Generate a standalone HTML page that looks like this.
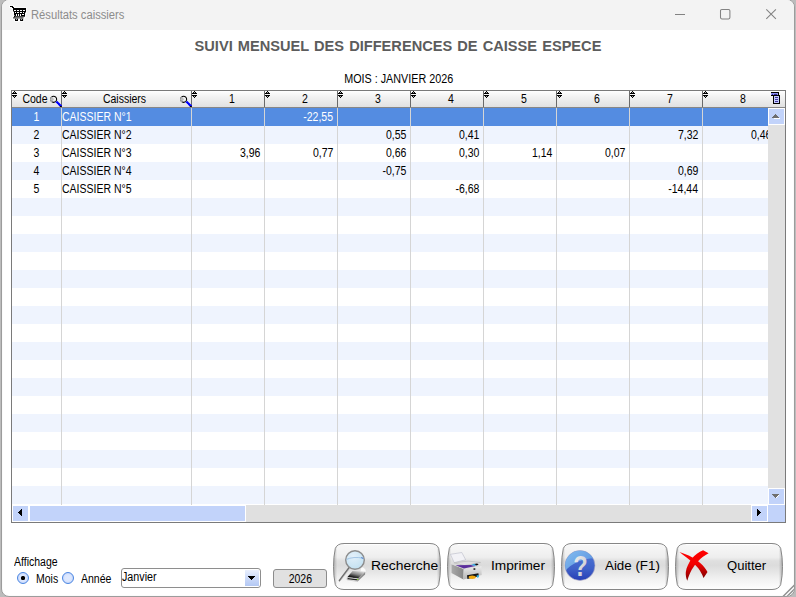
<!DOCTYPE html>
<html lang="fr"><head><meta charset="utf-8"><title>Résultats caissiers</title>
<style>
html,body{margin:0;padding:0}
body{width:796px;height:597px;overflow:hidden;background:#bcbcbc;font-family:"Liberation Sans",sans-serif;font-size:12px;color:#000;position:relative}
.win{position:absolute;left:1px;top:-1px;width:792px;height:596px;border:1px solid #9c9c9c;border-radius:8px;background:#fff;overflow:hidden;box-shadow:inset 0 0 0 1px #fbfbfb}
.tb{position:absolute;left:0;top:0;width:100%;height:30px;background:#f3f3f3}
.abs{position:absolute}
.ttl{position:absolute;left:29px;top:7px;font-size:12px;color:#8c8c8c;line-height:16px;white-space:nowrap}
.ttl span{display:inline-block;transform:scaleX(.934);transform-origin:left center}
.h1{position:absolute;left:0;width:792px;top:38px;text-align:center;font-weight:bold;font-size:14px;word-spacing:1px;transform:scaleX(1.043);color:#5c5c5c;line-height:16px;white-space:nowrap}
.mois{position:absolute;left:0;width:792px;top:72px;text-align:center;font-size:12px;line-height:14px;white-space:nowrap}
.nar{display:inline-block;transform:scaleX(.897);margin-left:2px}
.grid{position:absolute;left:9px;top:90px;width:773px;height:431px;border:1px solid #7a7a7a;background:#fff;overflow:hidden}
.hdr{position:absolute;left:0;top:0;width:773px;height:16px;border-bottom:1px solid #878787;background:linear-gradient(#fff 0,#fcfcfc 8%,#f4f4f4 30%,#e1e1e1 100%)}
.hc{position:absolute;top:0;height:16px;border-right:1px solid #6a6a6a;box-sizing:content-box}
.ht{position:absolute;top:1px;line-height:14px;white-space:nowrap;transform:scaleX(.875)}
.ht0{left:0;width:38px;text-align:center;left:4px}
.ht1{left:0;right:0;text-align:center;margin-left:-4px}
.ht2{left:0;width:72px;text-align:center;margin-left:4px}
.row{position:absolute;left:0;width:756px;height:18px}
.row.alt{background:#eff4fe}
.row.wh{background:#fff}
.row.sel{background:#548ce1;color:#fff}
.row span{position:absolute;top:2px;line-height:14px;white-space:nowrap}
.row span b{font-weight:normal;display:inline-block;transform:scaleX(.875)}
.c0{left:0;width:49px;text-align:center}
.c0 b{transform-origin:center}
.c1{left:50px}
.c1 b{transform-origin:left center}
.cn{width:68px;text-align:right}
.cn b{transform-origin:right center}
.vl{position:absolute;top:17px;width:1px;height:397px;background:#d5d5d5}
.vs{position:absolute;left:756px;top:17px;width:17px;height:397px;background:#e1e1e1}
.hs{position:absolute;left:0;top:414px;width:773px;height:17px;background:#fff}
.sbtn{position:absolute;width:15px;height:15px;border:1px solid #fff;background:#c2d3fa}
.thumb{position:absolute;left:17px;top:0;width:215px;height:15px;border:1px solid #fff;background:#c2d3fa}
.htrack{position:absolute;left:234px;top:0;width:505px;height:17px;background:#e0e0e0}
.corner{position:absolute;left:756px;top:0;width:17px;height:17px;background:#c2d3fa}
.srt{position:absolute;left:0;top:0;width:5px;height:7px}
.srt svg,.mag svg,.tblico svg{display:block}
.mag{position:absolute;right:-1px;top:4px;width:12px;height:12px}
.tblico{position:absolute;left:759px;top:1px;width:10px;height:12px}
.lbl{position:absolute;line-height:14px;white-space:nowrap}
.lbl b,.year b{font-weight:normal;display:inline-block;transform:scaleX(.875);transform-origin:left center}
.radio{position:absolute;width:10px;height:10px;border:1px solid #4a86e2;border-radius:50%;background:radial-gradient(circle,#dfe9ff 0,#dce7fe 45%,#c6d6fa 75%)}
.radio .dot{position:absolute;left:3px;top:3px;width:4px;height:4px;border-radius:1.500px;background:#000}
.combo{position:absolute;left:119px;top:568px;width:138px;height:18px;border:1px solid #8e8e8e;border-radius:3px;background:#fff}
.cbtn{position:absolute;right:1px;top:1px;width:14px;height:16px;background:linear-gradient(#e9effd,#cfdcf9 45%,#b3c8f4)}
.year{position:absolute;left:271px;top:569px;width:52px;height:17px;border:1px solid #8c8c8c;background:#e1e1e1;text-align:center;line-height:18px;border-radius:3px}
.year b{transform-origin:center}
.btn{position:absolute;top:543px;width:108px;height:47px}
.bt{position:absolute;top:15px;font-size:13.700px;line-height:16px;white-space:nowrap;transform-origin:left center}
.hc.last{border-right:none}

</style></head><body>
<div class="win">
<div class="tb"></div>
<svg class="abs" style="left:6px;top:4px" width="20" height="19" viewBox="8 4 20 19" shape-rendering="crispEdges"><path d="M9 5h5v3h-5zM11 6h4v3h-4zM12 7h15v3h-15zM12 8h15v3h-15zM12 9h15v3h-15zM12 10h15v3h-15zM13 11h14v3h-14zM13 12h13v3h-13zM13 13h13v3h-13zM13 14h13v3h-13zM13 15h13v3h-13zM12 16h13v3h-13zM12 17h13v3h-13zM14 18h10v3h-10zM14 19h10v3h-10z" fill="#fbfbfb"/><path d="M10 6h3v1h-3zM12 7h2v1h-2zM13 8h13v1h-13zM13 9h13v1h-13zM13 10h1v1h-1zM16 10h1v1h-1zM19 10h1v1h-1zM22 10h1v1h-1zM25 10h1v1h-1zM14 11h12v1h-12zM14 12h1v1h-1zM16 12h1v1h-1zM19 12h1v1h-1zM22 12h1v1h-1zM24 12h1v1h-1zM14 13h11v1h-11zM14 14h2v1h-2zM17 14h1v1h-1zM19 14h1v1h-1zM21 14h1v1h-1zM24 14h1v1h-1zM15 15h1v1h-1zM17 15h1v1h-1zM19 15h1v1h-1zM21 15h4v1h-4zM14 16h1v1h-1z" fill="#000"/><path d="M13 11h1v1h-1zM14 15h1v1h-1z" fill="#777"/><path d="M25 12h1v1h-1z" fill="#888"/><path d="M15 16h10v1h-10z" fill="#4a4a4a"/><g shape-rendering="auto"><path d="M14.900 16.600l-1.500 1.300h10.200" fill="none" stroke="#000" stroke-width=".9"/><path d="M15 18.800h3v2.100h-3zM20.100 18.800h3v2.100h-3z" fill="#000"/><path d="M16.100 19.300h.9v.8h-.9zM21.100 19.300h.9v.8h-.9z" fill="#fff"/></g></svg>
<div class="ttl"><span>Résultats caissiers</span></div>
<svg class="abs" style="left:672px;top:8px" width="106" height="12" viewBox="0 0 106 12" fill="none" stroke="#828282" stroke-width="1.050"><path d="M1 6.5h10"/><rect x="46.5" y="1.5" width="9.4" height="9.4" rx="1.3"/><path d="M92.3 1.3l9.6 9.6M101.9 1.3l-9.6 9.6"/></svg>
<div class="h1">SUIVI MENSUEL DES DIFFERENCES DE CAISSE ESPECE</div>
<div class="mois"><span class="nar">MOIS : JANVIER 2026</span></div>

<div class="grid"><div class="hdr"><div class="hc" style="left:0px;width:49px"><i class="srt"><svg width="5" height="7" viewBox="0 0 5 7" shape-rendering="crispEdges"><path d="M2 0h1v1H2zM1 1h3v1H1zM0 2h5v1H0zM0 4h5v1H0zM1 5h3v1H1zM2 6h1v1H2z"/><path d="M2 1h1v1H2zM2 5h1v1H2z" fill="#aaa"/></svg></i><span class="ht ht0">Code</span><i class="mag"><svg width="12" height="12" viewBox="0 0 12 12"><circle cx="3.6" cy="4.3" r="3.05" fill="#f0f0f0" stroke="#000" stroke-width="1.05"/><path d="M2.1 1.65A3.05 3.05 0 0 0 2.1 6.95" fill="none" stroke="#a9a9a9" stroke-width="1.15"/><path d="M2.3 2.4a2.600 2.600 0 0 0 0 3.800 4.500 4.500 0 0 0 1.700-1.900 4.500 4.500 0 0 0-1.700-1.900z" fill="#bdbdbd"/><path d="M6.300 6.700l5.100 4.800" stroke="#00f" stroke-width="2.300"/><path d="M5.900 8.100l3.600 3.500" stroke="#fff" stroke-width=".9" stroke-dasharray="1 1"/><path d="M9.800 11.500h2" stroke="#000" stroke-width="1"/></svg></i></div><div class="hc" style="left:50px;width:129px"><i class="srt"><svg width="5" height="7" viewBox="0 0 5 7" shape-rendering="crispEdges"><path d="M2 0h1v1H2zM1 1h3v1H1zM0 2h5v1H0zM0 4h5v1H0zM1 5h3v1H1zM2 6h1v1H2z"/><path d="M2 1h1v1H2zM2 5h1v1H2z" fill="#aaa"/></svg></i><span class="ht ht1">Caissiers</span><i class="mag"><svg width="12" height="12" viewBox="0 0 12 12"><circle cx="3.6" cy="4.3" r="3.05" fill="#f0f0f0" stroke="#000" stroke-width="1.05"/><path d="M2.1 1.65A3.05 3.05 0 0 0 2.1 6.95" fill="none" stroke="#a9a9a9" stroke-width="1.15"/><path d="M2.3 2.4a2.600 2.600 0 0 0 0 3.800 4.500 4.500 0 0 0 1.700-1.900 4.500 4.500 0 0 0-1.700-1.900z" fill="#bdbdbd"/><path d="M6.300 6.700l5.100 4.800" stroke="#00f" stroke-width="2.300"/><path d="M5.900 8.100l3.600 3.500" stroke="#fff" stroke-width=".9" stroke-dasharray="1 1"/><path d="M9.800 11.500h2" stroke="#000" stroke-width="1"/></svg></i></div><div class="hc" style="left:180px;width:72px"><i class="srt"><svg width="5" height="7" viewBox="0 0 5 7" shape-rendering="crispEdges"><path d="M2 0h1v1H2zM1 1h3v1H1zM0 2h5v1H0zM0 4h5v1H0zM1 5h3v1H1zM2 6h1v1H2z"/><path d="M2 1h1v1H2zM2 5h1v1H2z" fill="#aaa"/></svg></i><span class="ht ht2">1</span></div><div class="hc" style="left:253px;width:72px"><i class="srt"><svg width="5" height="7" viewBox="0 0 5 7" shape-rendering="crispEdges"><path d="M2 0h1v1H2zM1 1h3v1H1zM0 2h5v1H0zM0 4h5v1H0zM1 5h3v1H1zM2 6h1v1H2z"/><path d="M2 1h1v1H2zM2 5h1v1H2z" fill="#aaa"/></svg></i><span class="ht ht2">2</span></div><div class="hc" style="left:326px;width:72px"><i class="srt"><svg width="5" height="7" viewBox="0 0 5 7" shape-rendering="crispEdges"><path d="M2 0h1v1H2zM1 1h3v1H1zM0 2h5v1H0zM0 4h5v1H0zM1 5h3v1H1zM2 6h1v1H2z"/><path d="M2 1h1v1H2zM2 5h1v1H2z" fill="#aaa"/></svg></i><span class="ht ht2">3</span></div><div class="hc" style="left:399px;width:72px"><i class="srt"><svg width="5" height="7" viewBox="0 0 5 7" shape-rendering="crispEdges"><path d="M2 0h1v1H2zM1 1h3v1H1zM0 2h5v1H0zM0 4h5v1H0zM1 5h3v1H1zM2 6h1v1H2z"/><path d="M2 1h1v1H2zM2 5h1v1H2z" fill="#aaa"/></svg></i><span class="ht ht2">4</span></div><div class="hc" style="left:472px;width:72px"><i class="srt"><svg width="5" height="7" viewBox="0 0 5 7" shape-rendering="crispEdges"><path d="M2 0h1v1H2zM1 1h3v1H1zM0 2h5v1H0zM0 4h5v1H0zM1 5h3v1H1zM2 6h1v1H2z"/><path d="M2 1h1v1H2zM2 5h1v1H2z" fill="#aaa"/></svg></i><span class="ht ht2">5</span></div><div class="hc" style="left:545px;width:72px"><i class="srt"><svg width="5" height="7" viewBox="0 0 5 7" shape-rendering="crispEdges"><path d="M2 0h1v1H2zM1 1h3v1H1zM0 2h5v1H0zM0 4h5v1H0zM1 5h3v1H1zM2 6h1v1H2z"/><path d="M2 1h1v1H2zM2 5h1v1H2z" fill="#aaa"/></svg></i><span class="ht ht2">6</span></div><div class="hc" style="left:618px;width:72px"><i class="srt"><svg width="5" height="7" viewBox="0 0 5 7" shape-rendering="crispEdges"><path d="M2 0h1v1H2zM1 1h3v1H1zM0 2h5v1H0zM0 4h5v1H0zM1 5h3v1H1zM2 6h1v1H2z"/><path d="M2 1h1v1H2zM2 5h1v1H2z" fill="#aaa"/></svg></i><span class="ht ht2">7</span></div><div class="hc last" style="left:691px;width:82px"><i class="srt"><svg width="5" height="7" viewBox="0 0 5 7" shape-rendering="crispEdges"><path d="M2 0h1v1H2zM1 1h3v1H1zM0 2h5v1H0zM0 4h5v1H0zM1 5h3v1H1zM2 6h1v1H2z"/><path d="M2 1h1v1H2zM2 5h1v1H2z" fill="#aaa"/></svg></i><span class="ht ht2">8</span></div><i class="tblico"><svg width="10" height="12" viewBox="0 0 10 12" shape-rendering="crispEdges"><path d="M0 0h8v4H0z" fill="#000"/><path d="M0 1h7v2H0z" fill="#8f93f3"/><path d="M1 2h1v1H1zM3 2h3v1H3z" fill="#3a2f9a"/><path d="M2 3h7v9H2z" fill="#000"/><path d="M3 4h5v7H3z" fill="#c3cbff"/><path d="M4 5h3v1H4zM4 7h3v1H4zM4 9h3v1H4z" fill="#43359f"/></svg></i></div><div class="row sel" style="top:17px"><span class="c0"><b>1</b></span><span class="c1"><b>CAISSIER N°1</b></span><span class="cn" style="left:253px"><b>-22,55</b></span></div><div class="row alt" style="top:35px"><span class="c0"><b>2</b></span><span class="c1"><b>CAISSIER N°2</b></span><span class="cn" style="left:326px"><b>0,55</b></span><span class="cn" style="left:399px"><b>0,41</b></span><span class="cn" style="left:618px"><b>7,32</b></span><span class="cn" style="left:691px"><b>0,46</b></span></div><div class="row wh" style="top:53px"><span class="c0"><b>3</b></span><span class="c1"><b>CAISSIER N°3</b></span><span class="cn" style="left:180px"><b>3,96</b></span><span class="cn" style="left:253px"><b>0,77</b></span><span class="cn" style="left:326px"><b>0,66</b></span><span class="cn" style="left:399px"><b>0,30</b></span><span class="cn" style="left:472px"><b>1,14</b></span><span class="cn" style="left:545px"><b>0,07</b></span></div><div class="row alt" style="top:71px"><span class="c0"><b>4</b></span><span class="c1"><b>CAISSIER N°4</b></span><span class="cn" style="left:326px"><b>-0,75</b></span><span class="cn" style="left:618px"><b>0,69</b></span></div><div class="row wh" style="top:89px"><span class="c0"><b>5</b></span><span class="c1"><b>CAISSIER N°5</b></span><span class="cn" style="left:399px"><b>-6,68</b></span><span class="cn" style="left:618px"><b>-14,44</b></span></div><div class="row alt" style="top:107px"></div><div class="row wh" style="top:125px"></div><div class="row alt" style="top:143px"></div><div class="row wh" style="top:161px"></div><div class="row alt" style="top:179px"></div><div class="row wh" style="top:197px"></div><div class="row alt" style="top:215px"></div><div class="row wh" style="top:233px"></div><div class="row alt" style="top:251px"></div><div class="row wh" style="top:269px"></div><div class="row alt" style="top:287px"></div><div class="row wh" style="top:305px"></div><div class="row alt" style="top:323px"></div><div class="row wh" style="top:341px"></div><div class="row alt" style="top:359px"></div><div class="row wh" style="top:377px"></div><div class="row alt" style="top:395px"></div><i class="vl" style="left:49px"></i><i class="vl" style="left:179px"></i><i class="vl" style="left:252px"></i><i class="vl" style="left:325px"></i><i class="vl" style="left:398px"></i><i class="vl" style="left:471px"></i><i class="vl" style="left:544px"></i><i class="vl" style="left:617px"></i><i class="vl" style="left:690px"></i><div class="vs"><div class="sbtn" style="left:0;top:0"><svg class="abs" style="left:3px;top:5px" width="8" height="5" viewBox="0 0 8 5" shape-rendering="crispEdges"><path d="M2 4h6v1H2z" fill="#fff"/><path d="M3 0h1v1H3zM2 1h3v1H2zM1 2h5v1H1zM0 3h7v1H0z" fill="#6e6e6e"/></svg></div><div class="sbtn" style="left:0;top:380px"><svg class="abs" style="left:3px;top:5px" width="8" height="5" viewBox="0 0 8 5" shape-rendering="crispEdges"><path d="M0 0h7v1H0zM1 1h5v1H1zM2 2h3v1H2zM3 3h1v1H3z" fill="#6e6e6e"/><path d="M6 1h1v1H6zM5 2h1v1H5zM4 3h1v1H4z" fill="#fff"/></svg></div></div>
<div class="hs"><div class="sbtn" style="left:0;top:0"><svg class="abs" style="left:5px;top:3px" width="4" height="7" viewBox="0 0 4 7" shape-rendering="crispEdges"><path d="M3 0h1v7H3zM2 1h1v5H2zM1 2h1v3H1zM0 3h1v1H0z" fill="#000"/></svg></div><div class="thumb"></div><div class="htrack"></div><div class="sbtn" style="left:739px;top:0"><svg class="abs" style="left:5px;top:3px" width="4" height="7" viewBox="0 0 4 7" shape-rendering="crispEdges"><path d="M0 0h1v7H0zM1 1h1v5H1zM2 2h1v3H2zM3 3h1v1H3z" fill="#000"/></svg></div><div class="corner"></div></div>
</div>
<div class="lbl" style="left:12px;top:555px"><b>Affichage</b></div>
<i class="radio" style="left:15px;top:572px"><i class="dot"></i></i>
<div class="lbl" style="left:34px;top:572px"><b>Mois</b></div>
<i class="radio" style="left:60px;top:572px"></i>
<div class="lbl" style="left:79px;top:572px"><b>Année</b></div>
<div class="combo"><span class="lbl" style="left:-.500px;top:1px"><b style="transform:scaleX(.895)">Janvier</b></span><i class="cbtn"><svg class="abs" style="left:3px;top:6px" width="7" height="4" viewBox="0 0 7 4" shape-rendering="crispEdges"><path d="M0 0h7v1H0zM1 1h5v1H1zM2 2h3v1H2zM3 3h1v1H3z"/></svg></i></div>
<div class="year"><b>2026</b></div>
<svg class="abs" width="0" height="0" style="left:0;top:0"><defs><linearGradient id="bg" x1="0" y1="0" x2="0" y2="1"><stop offset="0" stop-color="#f8f8f8"/><stop offset=".3" stop-color="#eeeeee"/><stop offset=".38" stop-color="#dfdfdf"/><stop offset=".48" stop-color="#dcdcdc"/><stop offset=".62" stop-color="#e6e6e6"/><stop offset=".78" stop-color="#f2f2f2"/><stop offset="1" stop-color="#fefefe"/></linearGradient><linearGradient id="bs" x1="0" y1="0" x2="1" y2="0"><stop offset="0" stop-color="#000" stop-opacity=".22"/><stop offset=".035" stop-color="#000" stop-opacity="0"/><stop offset=".965" stop-color="#000" stop-opacity="0"/><stop offset="1" stop-color="#000" stop-opacity=".22"/></linearGradient></defs></svg>
<div class="btn" style="left:331px"><svg class="abs" style="left:0;top:0" width="108" height="47" viewBox="0 0 108 47"><path d="M11 .5H97C101.5 .5 104.4 2.2 105.7 5.4Q107.5 14 107.5 23.5Q107.5 33 105.7 41.6C104.4 44.8 101.5 46.5 97 46.5H11C6.5 46.5 3.6 44.8 2.3 41.6Q.5 33 .5 23.5Q.5 14 2.3 5.4C3.6 2.2 6.5 .5 11 .5Z" fill="url(#bg)"/><path d="M11 .5H97C101.5 .5 104.4 2.2 105.7 5.4Q107.5 14 107.5 23.5Q107.5 33 105.7 41.6C104.4 44.8 101.5 46.5 97 46.5H11C6.5 46.5 3.6 44.8 2.3 41.6Q.5 33 .5 23.5Q.5 14 2.3 5.4C3.6 2.2 6.5 .5 11 .5Z" fill="url(#bs)"/><path d="M11 1.500H97" stroke="#fff" stroke-width="1" opacity=".9"/><path d="M11 .5H97C101.5 .5 104.4 2.2 105.7 5.4Q107.5 14 107.5 23.5Q107.5 33 105.7 41.6C104.4 44.8 101.5 46.5 97 46.5H11C6.5 46.5 3.6 44.8 2.3 41.6Q.5 33 .5 23.5Q.5 14 2.3 5.4C3.6 2.2 6.5 .5 11 .5Z" fill="none" stroke="#868686" stroke-width="1"/></svg><span class="bt" style="left:37.500px;transform:scaleX(1.015)">Recherche</span></div>
<div class="btn" style="left:445px"><svg class="abs" style="left:0;top:0" width="108" height="47" viewBox="0 0 108 47"><path d="M11 .5H97C101.5 .5 104.4 2.2 105.7 5.4Q107.5 14 107.5 23.5Q107.5 33 105.7 41.6C104.4 44.8 101.5 46.5 97 46.5H11C6.5 46.5 3.6 44.8 2.3 41.6Q.5 33 .5 23.5Q.5 14 2.3 5.4C3.6 2.2 6.5 .5 11 .5Z" fill="url(#bg)"/><path d="M11 .5H97C101.5 .5 104.4 2.2 105.7 5.4Q107.5 14 107.5 23.5Q107.5 33 105.7 41.6C104.4 44.8 101.5 46.5 97 46.5H11C6.5 46.5 3.6 44.8 2.3 41.6Q.5 33 .5 23.5Q.5 14 2.3 5.4C3.6 2.2 6.5 .5 11 .5Z" fill="url(#bs)"/><path d="M11 1.500H97" stroke="#fff" stroke-width="1" opacity=".9"/><path d="M11 .5H97C101.5 .5 104.4 2.2 105.7 5.4Q107.5 14 107.5 23.5Q107.5 33 105.7 41.6C104.4 44.8 101.5 46.5 97 46.5H11C6.5 46.5 3.6 44.8 2.3 41.6Q.5 33 .5 23.5Q.5 14 2.3 5.4C3.6 2.2 6.5 .5 11 .5Z" fill="none" stroke="#868686" stroke-width="1"/></svg><span class="bt" style="left:44px;transform:scaleX(1)">Imprimer</span></div>
<div class="btn" style="left:559px"><svg class="abs" style="left:0;top:0" width="108" height="47" viewBox="0 0 108 47"><path d="M11 .5H97C101.5 .5 104.4 2.2 105.7 5.4Q107.5 14 107.5 23.5Q107.5 33 105.7 41.6C104.4 44.8 101.5 46.5 97 46.5H11C6.5 46.5 3.6 44.8 2.3 41.6Q.5 33 .5 23.5Q.5 14 2.3 5.4C3.6 2.2 6.5 .5 11 .5Z" fill="url(#bg)"/><path d="M11 .5H97C101.5 .5 104.4 2.2 105.7 5.4Q107.5 14 107.5 23.5Q107.5 33 105.7 41.6C104.4 44.8 101.5 46.5 97 46.5H11C6.5 46.5 3.6 44.8 2.3 41.6Q.5 33 .5 23.5Q.5 14 2.3 5.4C3.6 2.2 6.5 .5 11 .5Z" fill="url(#bs)"/><path d="M11 1.500H97" stroke="#fff" stroke-width="1" opacity=".9"/><path d="M11 .5H97C101.5 .5 104.4 2.2 105.7 5.4Q107.5 14 107.5 23.5Q107.5 33 105.7 41.6C104.4 44.8 101.5 46.5 97 46.5H11C6.5 46.5 3.6 44.8 2.3 41.6Q.5 33 .5 23.5Q.5 14 2.3 5.4C3.6 2.2 6.5 .5 11 .5Z" fill="none" stroke="#868686" stroke-width="1"/></svg><span class="bt" style="left:43.500px;transform:scaleX(.975)">Aide (F1)</span></div>
<div class="btn" style="left:673px"><svg class="abs" style="left:0;top:0" width="108" height="47" viewBox="0 0 108 47"><path d="M11 .5H97C101.5 .5 104.4 2.2 105.7 5.4Q107.5 14 107.5 23.5Q107.5 33 105.7 41.6C104.4 44.8 101.5 46.5 97 46.5H11C6.5 46.5 3.6 44.8 2.3 41.6Q.5 33 .5 23.5Q.5 14 2.3 5.4C3.6 2.2 6.5 .5 11 .5Z" fill="url(#bg)"/><path d="M11 .5H97C101.5 .5 104.4 2.2 105.7 5.4Q107.5 14 107.5 23.5Q107.5 33 105.7 41.6C104.4 44.8 101.5 46.5 97 46.5H11C6.5 46.5 3.6 44.8 2.3 41.6Q.5 33 .5 23.5Q.5 14 2.3 5.4C3.6 2.2 6.5 .5 11 .5Z" fill="url(#bs)"/><path d="M11 1.500H97" stroke="#fff" stroke-width="1" opacity=".9"/><path d="M11 .5H97C101.5 .5 104.4 2.2 105.7 5.4Q107.5 14 107.5 23.5Q107.5 33 105.7 41.6C104.4 44.8 101.5 46.5 97 46.5H11C6.5 46.5 3.6 44.8 2.3 41.6Q.5 33 .5 23.5Q.5 14 2.3 5.4C3.6 2.2 6.5 .5 11 .5Z" fill="none" stroke="#868686" stroke-width="1"/></svg><span class="bt" style="left:51.500px;transform:scaleX(.955)">Quitter</span></div>
<svg class="abs" style="left:335px;top:546px" width="36" height="38" viewBox="337 546 36 38"><defs><radialGradient id="lg" cx=".4" cy=".3" r=".8"><stop offset="0" stop-color="#e3f0fa"/><stop offset="1" stop-color="#bfdff0"/></radialGradient><linearGradient id="dk" x1=".8" y1="0" x2=".2" y2="1"><stop offset="0" stop-color="#e2e2e2"/><stop offset=".45" stop-color="#8a8a8a"/><stop offset=".8" stop-color="#1c1c1c"/><stop offset="1" stop-color="#000"/></linearGradient></defs><path d="M361 567c3 0 5.500 2 5 5l-1.500 3-5-.5z" fill="#fff" stroke="#d8d8d8" stroke-width=".5" opacity=".9"/><path d="M347.300 577.300l5.200-6.300 12.800.600-7.300 6.800z" fill="url(#dk)"/><path d="M347.300 577.300l10.700 1.200-.400 3-10.600-1.800z" fill="#f4f4f4" stroke="#9a9a9a" stroke-width=".4"/><path d="M347.600 578.600l10 1.300" stroke="#222" stroke-width="1.100"/><path d="M358 578.500l7.300-6.800-.300 2.800-7.400 7z" fill="#8e8e8e"/><rect x="357" y="578.800" width="1.200" height="1.200" fill="#7ed321"/><path d="M349.300 567.600l-9.800 12.900" stroke="#6e6e6e" stroke-width="1.700" stroke-linecap="round"/><path d="M349.900 568.100l-9.600 12.700" stroke="#c9c9c9" stroke-width=".6"/><circle cx="355" cy="560" r="9.300" fill="url(#lg)" stroke="#8c8c8c" stroke-width="1.400"/><path d="M346.300 559.500c4-2 11-2.800 17-1.200" fill="none" stroke="#9cc0e2" stroke-width=".9"/><path d="M361.300 557.600l2 .800" stroke="#4a78c8" stroke-width="1"/></svg>
<svg class="abs" style="left:447px;top:550px" width="36" height="32" viewBox="449 550 36 32"><defs><linearGradient id="pl" x1="0" y1="0" x2="1" y2="0"><stop offset="0" stop-color="#a9a9a9"/><stop offset="1" stop-color="#858585"/></linearGradient><linearGradient id="pf" x1="0" y1="0" x2="0" y2="1"><stop offset="0" stop-color="#ececec"/><stop offset="1" stop-color="#b4b4b4"/></linearGradient></defs><path d="M450.400 554.300l11.400-1.800 3.900 7.300-11.500 2.800z" fill="#f2f2f6" stroke="#b9bbc8" stroke-width=".6"/><path d="M451.500 564.300l12.200 4.700-.3 10.600-11.900-6.500z" fill="url(#pl)"/><path d="M463.700 569l17.700-3 .3 9-18.300 4.600z" fill="url(#pf)"/><path d="M451.500 564.300l3-1.800 13.600-1.500 13 1.500.3 3.600-17.700 3z" fill="#dadada"/><path d="M454.100 562.800l14-1.700 12.500 1.300-16.200 3.200z" fill="#dedede" stroke="#b0b0b0" stroke-width=".5"/><path d="M455.500 565.200l15.500-.2 4.500 1.100-11.600 2.400z" fill="#5b2e9c"/><path d="M471 565l3-1.300 2.500.8-1 1.600z" fill="#3aa8e2"/><path d="M474.500 564l2.600-.6 1.500 1-2 1z" fill="#111"/><rect x="473.500" y="568.300" width="1.800" height="1.500" fill="#111"/><path d="M467 575.300l11.400-2 .4 2.900-11.400 2.800z" fill="#161616"/><ellipse cx="472.200" cy="577.200" rx="3.600" ry="1.700" fill="#f0a80c"/><path d="M476.500 575.500l2.300-.4.200 1.800-1.600 1.200z" fill="#38b4e6"/></svg>
<svg class="abs" style="left:561px;top:548px" width="34" height="35" viewBox="563 548 34 35"><defs><linearGradient id="hb" x1="0" y1="0" x2="0" y2="1"><stop offset="0" stop-color="#4e78d6"/><stop offset=".6" stop-color="#3f61c8"/><stop offset="1" stop-color="#263eb6"/></linearGradient><linearGradient id="hg" x1="0" y1="0" x2="1" y2="1"><stop offset="0" stop-color="#8cc6f2"/><stop offset="1" stop-color="#4f86dc"/></linearGradient><linearGradient id="hq" x1="0" y1="0" x2="1" y2="1"><stop offset="0" stop-color="#f4f4f4"/><stop offset="1" stop-color="#c2c2c6"/></linearGradient><clipPath id="hc"><circle cx="580" cy="565.500" r="14.800"/></clipPath></defs><circle cx="580" cy="565.500" r="15" fill="url(#hb)" stroke="#b9b4c4" stroke-width=".6"/><path d="M563 574c6-9.500 18-15.500 34-16v-14h-34z" fill="url(#hg)" clip-path="url(#hc)"/><text transform="translate(580.400 576.200) scale(.8 1)" text-anchor="middle" font-family="Liberation Sans,sans-serif" font-weight="bold" font-size="29.500" fill="url(#hq)">?</text></svg>
<svg class="abs" style="left:676px;top:548px" width="34" height="35" viewBox="678 548 34 35"><defs><linearGradient id="xr" x1="0" y1="0" x2="0" y2="1"><stop offset="0" stop-color="#ff0000"/><stop offset=".45" stop-color="#f40000"/><stop offset="1" stop-color="#7e0000"/></linearGradient></defs><path d="M703.100 550.300l5.500 2.900c-4 2-7.500 4.800-10.300 7.800-3.200 3.400-5.200 6.400-6.600 8.800-1.900 3.500-3.400 7.500-4.400 11-1.200-2.800-1.800-5.800-1.500-8.800.6-4.600 3-9.400 5.900-13.300 3.200-3.800 7-6.600 11.400-8.400z" fill="url(#xr)"/><path d="M679.500 552.100c4.600 1.400 8.800 3.200 12.900 5.500 3.200 1.800 5.800 3.600 8.100 5.600 3 2.600 5.400 5.600 7 8.800l-4 5.900c-1.300-3.400-3-6.600-5.200-9.600-1.700-2.300-3.700-4.200-5.900-5.900-3.800-3.200-8.400-6.600-12.900-10.300z" fill="url(#xr)"/></svg>
<svg class="abs" style="left:778px;top:582px" width="14" height="14" viewBox="780 582 14 14" fill="none"><path d="M782.800 596.700L794.500 585" stroke="#8e8e8e" stroke-width="1.400"/><path d="M786.800 596.700L794.500 589" stroke="#8e8e8e" stroke-width="1.400"/><path d="M790.300 596.200L794.500 592" stroke="#a8a8a8" stroke-width="1.300" stroke-dasharray="1 .8"/></svg>
</div>

</body></html>
